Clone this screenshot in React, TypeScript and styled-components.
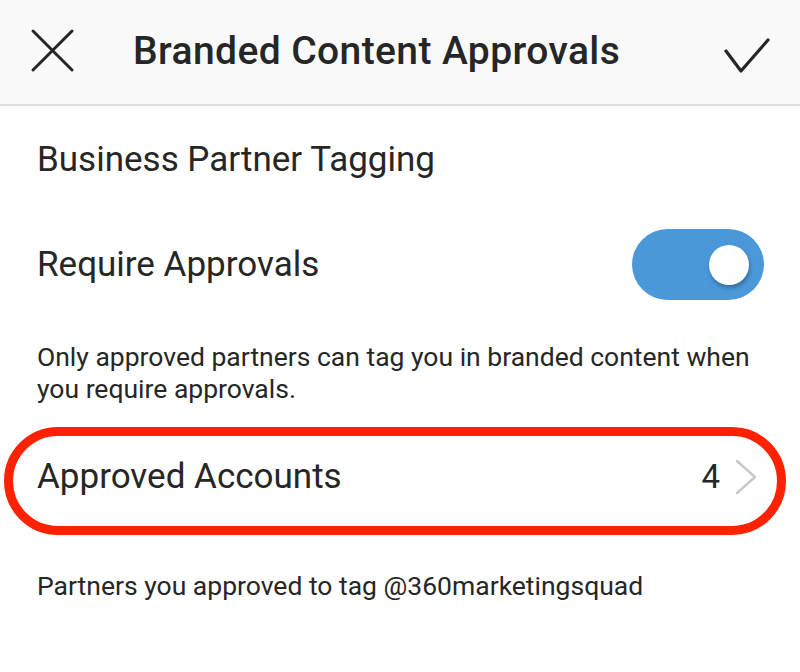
import React from "react";
import styled, { createGlobalStyle } from "styled-components";

const Global = createGlobalStyle`
  html, body { margin: 0; padding: 0; background: #ffffff; }
  body { font-family: Roboto, "Noto Sans", sans-serif; color: #262626; }
`;

const Page = styled.div`
  width: 800px;
  height: 672px;
  overflow: hidden;
  background: #ffffff;
`;

const Header = styled.header`
  height: 106px;
  background: #f9f9f9;
  border-bottom: 2px solid #e0e0e0;
  box-shadow: 0 1px 2px rgba(0, 0, 0, 0.05);
  display: flex;
  align-items: center;
  padding: 0 31px 2px 30px;
  box-sizing: border-box;
`;

const IconButton = styled.div<{ $w: number }>`
  width: ${p => p.$w}px;
  height: 46px;
  display: flex;
  align-items: center;
  justify-content: center;
  flex: none;
  svg { overflow: visible; display: block; }
`;

const Title = styled.h1`
  margin: 0 0 0 57px;
  flex: 1;
  font-size: 39px;
  line-height: 46px;
  font-weight: 500;
  letter-spacing: 0.4px;
  color: #262626;
`;

const Content = styled.main`
  display: flex;
  flex-direction: column;
`;

const SectionTitle = styled.div`
  font-size: 35px;
  line-height: 42px;
  color: #262626;
  padding: 33px 37px 0;
`;

const Row = styled.div`
  display: flex;
  align-items: center;
  justify-content: space-between;
  height: 71px;
  margin-top: 48px;
  padding: 0 36px 0 37px;
  box-sizing: border-box;
`;

const RowLabel = styled.span`
  font-size: 35px;
  line-height: 42px;
  color: #262626;
`;

const Track = styled.div`
  width: 132px;
  height: 71px;
  border-radius: 36px;
  background: #4a98d9;
  display: flex;
  align-items: center;
  justify-content: flex-end;
  padding-right: 15px;
  box-sizing: border-box;
`;

const Knob = styled.div`
  width: 40px;
  height: 40px;
  border-radius: 50%;
  background: #ffffff;
  box-shadow: 1px 3px 4px rgba(0, 0, 0, 0.28);
`;

const Note = styled.p<{ $top: number }>`
  margin: ${p => p.$top}px 0 0;
  font-size: 26.5px;
  line-height: 32px;
  color: #262626;
  padding: 0 37px;
`;

const Highlight = styled.div`
  margin: 22px 14px 0 4px;
  height: 108px;
  border: 9px solid #ff2200;
  border-radius: 54px;
  box-sizing: border-box;
  display: flex;
  align-items: center;
  justify-content: space-between;
  padding: 0 20px 8px 24px;
`;

const Trailing = styled.div`
  display: flex;
  align-items: center;
  gap: 15px;
`;

const Count = styled.span`
  font-size: 33px;
  line-height: 40px;
  color: #262626;
`;

export default function App() {
  return (
    <Page>
      <Global />
      <Header>
        <IconButton $w={46}>
          <svg width="46" height="46" viewBox="0 0 46 46">
            <path d="M3 3 L42 42 M42 3 L3 42" stroke="#262626" strokeWidth="3" strokeLinecap="round" fill="none" />
          </svg>
        </IconButton>
        <Title>Branded Content Approvals</Title>
        <IconButton $w={48}>
          <svg width="48" height="46" viewBox="0 0 48 46">
            <path d="M5 23 L20 43 L47 12" stroke="#262626" strokeWidth="3.2" strokeLinecap="round" strokeLinejoin="round" fill="none" />
          </svg>
        </IconButton>
      </Header>
      <Content>
        <SectionTitle>Business Partner Tagging</SectionTitle>
        <Row>
          <RowLabel>Require Approvals</RowLabel>
          <Track>
            <Knob />
          </Track>
        </Row>
        <Note $top={41}>Only approved partners can tag you in branded content when you require approvals.</Note>
        <Highlight>
          <RowLabel>Approved Accounts</RowLabel>
          <Trailing>
            <Count>4</Count>
            <svg width="22" height="36" viewBox="0 0 22 36">
              <path d="M2 2 L20 18 L2 34" stroke="#c8c8c8" strokeWidth="2.5" strokeLinecap="round" strokeLinejoin="round" fill="none" />
            </svg>
          </Trailing>
        </Highlight>
        <Note $top={35}>Partners you approved to tag @360marketingsquad</Note>
      </Content>
    </Page>
  );
}
